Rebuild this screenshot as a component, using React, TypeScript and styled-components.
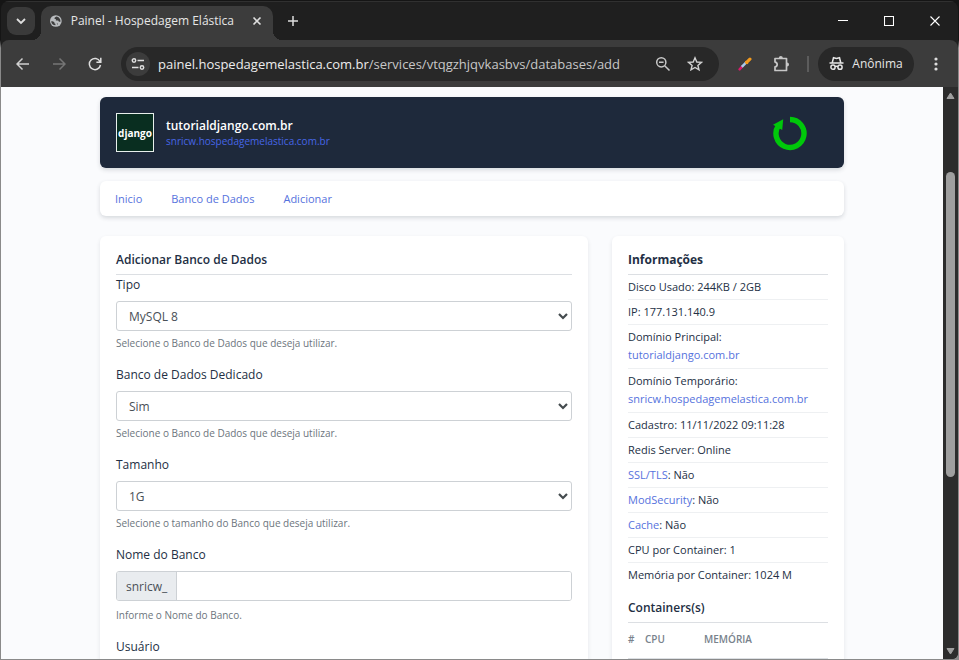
import React from "react";
import styled, { createGlobalStyle } from "styled-components";

const Global = createGlobalStyle`
  *, *::before, *::after { box-sizing: border-box; }
  html, body, #root { height: 100%; }
  body { margin: 0; background: #8a8a8a; font-family: "Open Sans", "Noto Sans", sans-serif; overflow: hidden; }
  a { color: #5672dd; text-decoration: none; }
  button, input, select { font: inherit; }
`;

const Window = styled.div`
  height: 100vh;
  padding: 1px;
  background: linear-gradient(#151515 0 40px, #8a8a8a 48px);
`;
const Frame = styled.div`
  height: 100%;
  display: flex;
  flex-direction: column;
  overflow: hidden;
  border-radius: 8px 8px 6px 0;
  background: #1f1f1f;
`;
const TabStrip = styled.header`
  flex: none;
  height: 39px;
  display: flex;
  align-items: center;
  padding-left: 6px;
  border-top: 1px solid #303030;
`;
const IconButton = styled.button<{ $size?: number; $bg?: string; $radius?: number }>`
  flex: none;
  width: ${(p) => p.$size ?? 28}px;
  height: ${(p) => p.$size ?? 28}px;
  padding: 0;
  border: 0;
  display: grid;
  place-items: center;
  color: #dedede;
  background: ${(p) => p.$bg ?? "transparent"};
  border-radius: ${(p) => p.$radius ?? 14}px;
`;
const Tab = styled.div`
  position: relative;
  align-self: flex-end;
  width: 232px;
  height: 34px;
  margin: 0 6px;
  padding: 0 2px 5px 9px;
  display: flex;
  align-items: center;
  gap: 9px;
  background: #3c3c3c;
  border-radius: 10px 10px 0 0;
  color: #e6e6e6;
  font-size: 12px;
  white-space: nowrap;
  &::before, &::after {
    content: "";
    position: absolute;
    bottom: 0;
    width: 9px;
    height: 9px;
  }
  &::before { left: -9px; background: radial-gradient(circle at 0 0, transparent 9px, #3c3c3c 9px); }
  &::after { right: -9px; background: radial-gradient(circle at 100% 0, transparent 9px, #3c3c3c 9px); }
`;
const TabTitle = styled.span`flex: 1;`;
const Controls = styled.div`
  margin-left: auto;
  display: flex;
`;
const ControlButton = styled.button`
  width: 46px;
  height: 37px;
  padding: 0;
  border: 0;
  background: none;
  color: #fff;
  display: grid;
  place-items: center;
`;
const Toolbar = styled.div`
  flex: none;
  height: 47px;
  display: flex;
  align-items: center;
  padding: 0 8px;
  background: #3c3c3c;
  border-radius: 8px 8px 0 0;
`;
const NavButtons = styled.div`
  display: flex;
  gap: 8px;
  margin-right: 12px;
`;
const Omnibox = styled.div`
  flex: 1;
  min-width: 0;
  height: 34px;
  display: flex;
  align-items: center;
  gap: 4px;
  padding: 0 10px 0 5px;
  border-radius: 17px;
  background: #282828;
`;
const Url = styled.div`
  flex: 1;
  min-width: 0;
  overflow: hidden;
  padding-left: 4px;
  white-space: nowrap;
  font-size: 13px;
  color: #c7c7c7;
  span { color: #ececec; }
`;
const Extensions = styled.div`
  display: flex;
  align-items: center;
  gap: 9px;
  padding: 0 9px 0 12px;
`;
const Divider = styled.span`
  width: 2px;
  height: 16px;
  margin-left: 2px;
  background: #5c5c5c;
`;
const Incognito = styled.button`
  height: 34px;
  width: 96px;
  margin-right: 8px;
  padding: 0;
  border: 0;
  border-radius: 17px;
  display: flex;
  align-items: center;
  justify-content: center;
  gap: 8px;
  background: #282828;
  color: #e6e6e6;
  font-size: 12px;
`;

const Viewport = styled.div`
  flex: 1;
  min-height: 0;
  display: flex;
`;
const Page = styled.main`
  flex: 1;
  min-width: 0;
  overflow: hidden;
  padding: 10px 16px 0;
  background: #fafbfd;
  color: #232f44;
`;
const Container = styled.div`
  max-width: 744px;
  margin: 0 auto;
`;
const Scrollbar = styled.div`
  flex: none;
  width: 15px;
  display: flex;
  flex-direction: column;
  align-items: center;
  justify-content: space-between;
  padding: 5px 0 4px;
  background: #2c2c2c;
`;
const Track = styled.div`
  flex: 1;
  width: 9px;
  padding-top: 73px;
`;
const Thumb = styled.div`
  width: 9px;
  height: 64%;
  border-radius: 5px;
  background: #9f9f9f;
`;
const shadow = "0 2px 4px rgba(30, 41, 59, 0.16)";
const Banner = styled.section`
  display: flex;
  align-items: center;
  gap: 12px;
  height: 71px;
  padding: 0 37px 0 16px;
  border-radius: 6px;
  background: #1e293b;
  box-shadow: ${shadow};
`;
const Logo = styled.div`
  width: 38px;
  height: 39px;
  display: grid;
  place-items: center;
  border: 1px solid #e8efec;
  background: #092e20;
  color: #fff;
  font-size: 10px;
  font-weight: 700;
`;
const SiteNames = styled.div`
  flex: 1;
  display: flex;
  flex-direction: column;
  line-height: 14px;
  font-size: 10px;
  a { color: #4666e6; }
`;
const SiteName = styled.strong`
  color: #fff;
  font-size: 12px;
  line-height: 16px;
  font-weight: 600;
`;
const Menu = styled.nav`
  display: flex;
  align-items: center;
  gap: 29px;
  height: 35px;
  margin: 13px 0 20px;
  padding: 0 15px;
  border-radius: 6px;
  background: #fff;
  box-shadow: ${shadow};
  font-size: 11px;
  font-weight: 500;
`;
const Columns = styled.div`
  display: grid;
  grid-template-columns: minmax(0, 1fr) 232px;
  gap: 24px;
`;
const Card = styled.section`
  padding: 16px;
  border-radius: 6px;
  background: #fff;
  box-shadow: 0 2px 4px rgba(30, 41, 59, 0.1);
`;
const Heading = styled.h2<{ $bold?: boolean }>`
  margin: 0;
  padding-bottom: 6px;
  border-bottom: 1px solid #dcdfe3;
  font-size: 12px;
  line-height: 16px;
  font-weight: ${(p) => (p.$bold ? 700 : 600)};
`;
const Field = styled.div`
  display: flex;
  flex-direction: column;
  margin-bottom: 14px;
`;
const Label = styled.label`
  margin-bottom: 6px;
  font-size: 12px;
  line-height: 20px;
`;
const SelectBox = styled.div`
  display: grid;
  align-items: center;
  > * { grid-area: 1 / 1; }
  svg { justify-self: end; margin-right: 4px; pointer-events: none; color: #444b4e; }
`;
const Select = styled.select`
  appearance: none;
  width: 100%;
  height: 30px;
  padding: 1px 12px 0;
  border: 1px solid #cdd1d5;
  border-radius: 3px;
  background: #fff;
  color: #495057;
  font-size: 12px;
`;
const InputGroup = styled.div`
  display: flex;
  height: 30px;
  border: 1px solid #cdd1d5;
  border-radius: 3px;
  overflow: hidden;
  font-size: 12px;
  color: #495057;
  margin-bottom: 2px;
`;
const Prefix = styled.span`
  display: flex;
  align-items: center;
  padding: 0 9px;
  background: #e9ecef;
  border-right: 1px solid #cdd1d5;
`;
const Input = styled.input`
  flex: 1;
  min-width: 0;
  border: 0;
  padding: 0 12px;
  color: inherit;
`;
const Help = styled.small`
  margin-top: 4px;
  font-size: 10px;
  line-height: 16px;
  color: #6c757d;
`;
const InfoList = styled.ul`
  list-style: none;
  margin: 0 0 13px;
  padding: 0;
  font-size: 11px;
  line-height: 18px;
`;
const InfoRow = styled.li<{ $stacked?: boolean }>`
  display: ${(p) => (p.$stacked ? "grid" : "block")};
  padding: 3px 0 ${(p) => (p.$stacked ? 4 : 3)}px;
  border-bottom: 1px solid #eef0f2;
  &:last-child { border-bottom: 0; }
`;
const Table = styled.table`
  width: 100%;
  border-collapse: collapse;
  table-layout: fixed;
  th {
    height: 35px;
    padding: 0 0 2px;
    border-bottom: 1px solid #dcdfe3;
    color: #78828c;
    font-size: 10px;
    font-weight: 600;
    text-align: left;
  }
  th:nth-child(1) { width: 17px; }
  th:nth-child(2) { width: 59px; }
`;

const stroke = { fill: "none", stroke: "currentColor", strokeWidth: 1.7 } as const;

const Globe = () => (
  <svg width="14" height="14" viewBox="0 0 14 14">
    <circle cx="7" cy="7" r="7" fill="#b9bcbf" />
    <path d="M1.4 7.2c2 .1 3.4.4 3.9 1.5.3.9 0 1.5 1.2 1.7v1.8C3.8 12.1 1.6 10 1.4 7.2zM7.5 1.5l-2 1.6v1.5H7v1.9h2.8l.9 1.5h1.8C13 4.4 10.5 1.700 7.500 1.500zM8 9.200l1.500 1.500-.5 1.200" fill="#3c3c3c" />
  </svg>
);
const Back = ({ flip }: { flip?: boolean }) => (
  <svg width="14" height="14" viewBox="0 0 14 14" {...stroke} stroke={flip ? "#757575" : "#d0d0d0"} strokeWidth="1.500">
    <path d={flip ? "M1 7h11.500M7.500 1.500 13 7l-5.500 5.500" : "M13 7H1.500M6.500 1.500 1 7l5.500 5.500"} />
  </svg>
);
const Reload = () => (
  <svg width="14" height="14" viewBox="0 0 14 14" {...stroke} strokeWidth="1.500">
    <path d="M12 4.500A5.600 5.600 0 1 0 12.500 8M12.800.8v4.400H8.400" />
  </svg>
);
const Tune = () => (
  <svg width="14" height="14" viewBox="0 0 14 14" {...stroke} strokeWidth="1.500">
    <circle cx="3" cy="3.500" r="1.700" /><circle cx="11" cy="10.500" r="1.700" />
    <path d="M6.500 3.500H13M1 10.500h6.500" />
  </svg>
);
const ZoomOut = () => (
  <svg width="16" height="16" viewBox="0 0 16 16" {...stroke} stroke="#c7c7c7" strokeWidth="1.500">
    <circle cx="6.300" cy="6.300" r="4.600" /><path d="M9.700 9.700l4.800 4.800M4 6.300h4.600" />
  </svg>
);
const Star = () => (
  <svg width="16" height="16" viewBox="0 0 16 16" {...stroke} stroke="#d0d0d0" strokeWidth="1.400">
    <path d="M8 1.800l1.800 4.200 4.600.4-3.500 3 1.100 4.500L8 11.500l-4 2.400 1.100-4.500-3.500-3 4.600-.4z" />
  </svg>
);
const Picker = () => (
  <svg width="14" height="14" viewBox="0 0 14 14" fill="none">
    <path d="M1.600 12.400l2.800-3.200" stroke="#d81b6a" strokeWidth="2.400" strokeLinecap="round" />
    <path d="M3.800 9.800l4.700-4.700" stroke="#a9c9ec" strokeWidth="2.600" />
    <path d="M8.600 5.300l3.300-3.100" stroke="#f39a1d" strokeWidth="3.200" strokeLinecap="round" />
    <path d="M7.300 4.200l2.600 2.600" stroke="#f39a1d" strokeWidth="1.400" />
  </svg>
);
const Puzzle = () => (
  <svg width="18" height="18" viewBox="0 0 18 18" {...stroke} stroke="#c7c7c7">
    <path d="M2 3.500h11.500v12H2v-3.600c2.900-.2 2.900-4.600 0-4.800z" strokeLinejoin="round" />
    <path d="M5.800 3a2 2 0 0 1 4 0zM14 7.500a2 2 0 0 1 0 4z" fill="#c7c7c7" stroke="none" />
  </svg>
);
const Spy = () => (
  <svg width="15" height="15" viewBox="0 0 15 15" {...stroke} strokeWidth="1.500">
    <path d="M.5 7h14M3.300 6.500l1.200-4.800 3 .7 3-.7 1.200 4.800" />
    <circle cx="4" cy="11.200" r="2.100" /><circle cx="11" cy="11.200" r="2.100" /><path d="M6 10.700q1.500-.8 3 0" />
  </svg>
);
const Chevron = ({ size = 10, weight = 1.8 }: { size?: number; weight?: number }) => (
  <svg width={size} height={size} viewBox="0 0 10 10" {...stroke} strokeWidth={weight}>
    <path d="M1 3l4 4 4-4" />
  </svg>
);
const Glyph = ({ d, size = 10, weight = 1.6 }: { d: string; size?: number; weight?: number }) => (
  <svg width={size} height={size} viewBox="0 0 10 10" {...stroke} strokeWidth={weight}><path d={d} /></svg>
);
const Restart = () => (
  <svg width="34" height="36" viewBox="0 0 34 36" aria-label="Reiniciar">
    <path d="M17 4.500A14 14 0 1 1 5.500 10.500" fill="none" stroke="#00c80a" strokeWidth="5.400" />
    <path d="M0 9.800L10.200 4.300 9.200 15z" fill="#00c80a" />
  </svg>
);
const Arrow = ({ down }: { down?: boolean }) => (
  <svg width="9" height="7" viewBox="0 0 9 7">
    <path d={down ? "M1 .5h7L4.500 6z" : "M1 6.500h7L4.500 1z"} fill="#9f9f9f" stroke="#9f9f9f" strokeLinejoin="round" />
  </svg>
);

const fields = [
  { id: "tipo", label: "Tipo", value: "MySQL 8", help: "Selecione o Banco de Dados que deseja utilizar." },
  { id: "dedicado", label: "Banco de Dados Dedicado", value: "Sim", help: "Selecione o Banco de Dados que deseja utilizar." },
  { id: "tamanho", label: "Tamanho", value: "1G", help: "Selecione o tamanho do Banco que deseja utilizar." },
];

export default function App() {
  return (
    <Window>
      <Global />
      <Frame>
        <TabStrip>
          <IconButton $bg="#3a3a3a" $radius={9} aria-label="Pesquisar guias"><Chevron /></IconButton>
          <Tab>
            <Globe />
            <TabTitle>Painel - Hospedagem Elástica</TabTitle>
            <IconButton aria-label="Fechar guia"><Glyph d="M1.500 1.500l7 7M8.500 1.500l-7 7" /></IconButton>
          </Tab>
          <IconButton aria-label="Nova guia"><Glyph weight={1.5} d="M5 0v10M0 5h10" /></IconButton>
          <Controls>
            <ControlButton aria-label="Minimizar"><Glyph weight={1} d="M0 4.500h10" /></ControlButton>
            <ControlButton aria-label="Maximizar"><Glyph weight={1.1} d="M.5.5h9v9h-9z" /></ControlButton>
            <ControlButton aria-label="Fechar"><Glyph weight={1.1} d="M.5.5l9 9M9.500.5l-9 9" /></ControlButton>
          </Controls>
        </TabStrip>
        <Toolbar>
          <NavButtons>
            <IconButton aria-label="Voltar"><Back /></IconButton>
            <IconButton aria-label="Avançar"><Back flip /></IconButton>
            <IconButton aria-label="Recarregar"><Reload /></IconButton>
          </NavButtons>
          <Omnibox>
            <IconButton $size={24} $bg="#3c3c3c" aria-label="Informações do site"><Tune /></IconButton>
            <Url><span>painel.hospedagemelastica.com.br</span>/services/vtqgzhjqvkasbvs/databases/add</Url>
            <IconButton aria-label="Zoom"><ZoomOut /></IconButton>
            <IconButton aria-label="Favoritar"><Star /></IconButton>
          </Omnibox>
          <Extensions>
            <IconButton aria-label="Seletor de cores"><Picker /></IconButton>
            <IconButton aria-label="Extensões"><Puzzle /></IconButton>
            <Divider />
          </Extensions>
          <Incognito><Spy />Anônima</Incognito>
          <IconButton aria-label="Menu">
            <svg width="4" height="16" viewBox="0 0 4 16" fill="#dedede">
              <circle cx="2" cy="3" r="1.600" /><circle cx="2" cy="8" r="1.600" /><circle cx="2" cy="13" r="1.600" />
            </svg>
          </IconButton>
        </Toolbar>
        <Viewport>
          <Page>
            <Container>
              <Banner>
                <Logo>django</Logo>
                <SiteNames>
                  <SiteName>tutorialdjango.com.br</SiteName>
                  <a href="#site">snricw.hospedagemelastica.com.br</a>
                </SiteNames>
                <Restart />
              </Banner>
              <Menu>
                <a href="#inicio">Inicio</a>
                <a href="#bancos">Banco de Dados</a>
                <a href="#adicionar">Adicionar</a>
              </Menu>
              <Columns>
                <Card>
                  <Heading>Adicionar Banco de Dados</Heading>
                  {fields.map((f) => (
                    <Field key={f.id}>
                      <Label htmlFor={f.id}>{f.label}</Label>
                      <SelectBox>
                        <Select id={f.id}><option>{f.value}</option></Select>
                        <Chevron weight={2.2} />
                      </SelectBox>
                      <Help>{f.help}</Help>
                    </Field>
                  ))}
                  <Field>
                    <Label htmlFor="nome">Nome do Banco</Label>
                    <InputGroup><Prefix>snricw_</Prefix><Input id="nome" /></InputGroup>
                    <Help>Informe o Nome do Banco.</Help>
                  </Field>
                  <Field>
                    <Label htmlFor="usuario">Usuário</Label>
                    <InputGroup><Input id="usuario" /></InputGroup>
                  </Field>
                </Card>
                <Card>
                  <Heading $bold>Informações</Heading>
                  <InfoList>
                    <InfoRow>Disco Usado: 244KB / 2GB</InfoRow>
                    <InfoRow>IP: 177.131.140.9</InfoRow>
                    <InfoRow $stacked><span>Domínio Principal:</span><a href="#dominio">tutorialdjango.com.br</a></InfoRow>
                    <InfoRow $stacked><span>Domínio Temporário:</span><a href="#temporario">snricw.hospedagemelastica.com.br</a></InfoRow>
                    <InfoRow>Cadastro: 11/11/2022 09:11:28</InfoRow>
                    <InfoRow>Redis Server: Online</InfoRow>
                    <InfoRow><a href="#ssl">SSL/TLS</a>: Não</InfoRow>
                    <InfoRow><a href="#modsecurity">ModSecurity</a>: Não</InfoRow>
                    <InfoRow><a href="#cache">Cache</a>: Não</InfoRow>
                    <InfoRow>CPU por Container: 1</InfoRow>
                    <InfoRow>Memória por Container: 1024 M</InfoRow>
                  </InfoList>
                  <Heading>Containers(s)</Heading>
                  <Table>
                    <thead><tr><th>#</th><th>CPU</th><th>MEMÓRIA</th></tr></thead>
                    <tbody />
                  </Table>
                </Card>
              </Columns>
            </Container>
          </Page>
          <Scrollbar><Arrow /><Track><Thumb /></Track><Arrow down /></Scrollbar>
        </Viewport>
      </Frame>
    </Window>
  );
}
